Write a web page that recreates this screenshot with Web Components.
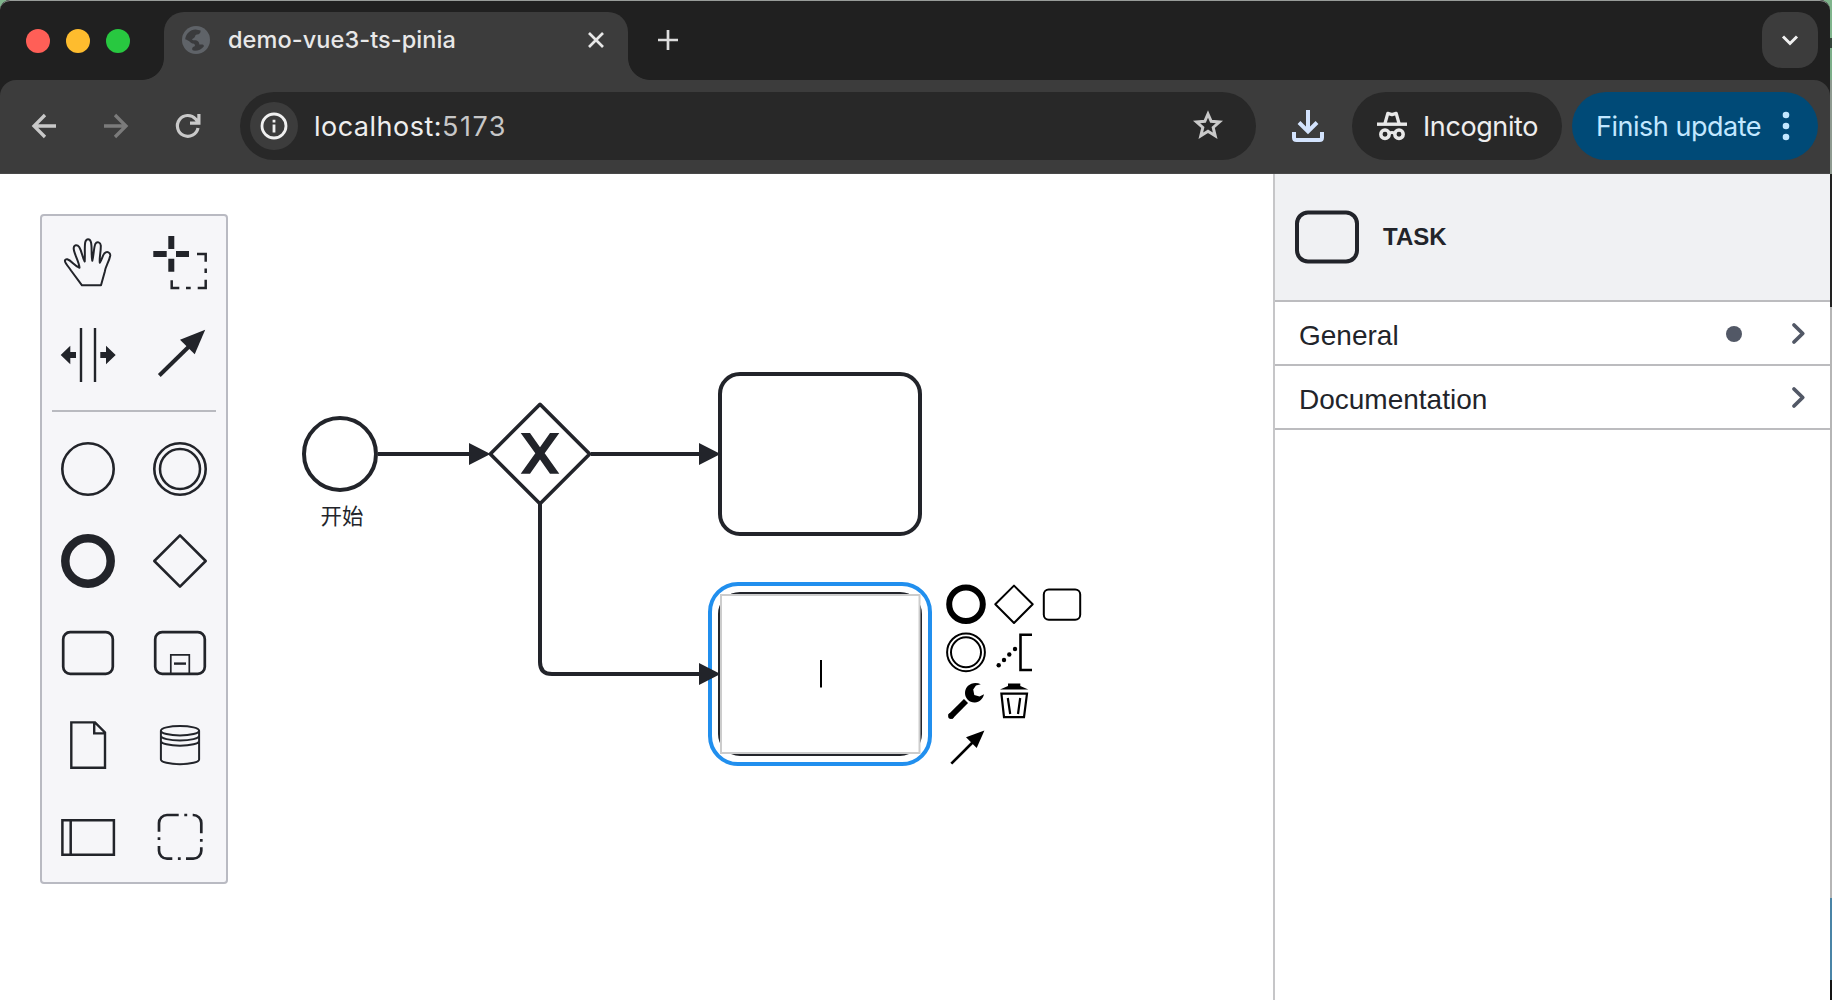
<!DOCTYPE html>
<html lang="en">
<head>
<meta charset="utf-8">
<title>demo-vue3-ts-pinia</title>
<style>
html,body{margin:0;height:100%;overflow:hidden;background:#1c1c1c}
</style>
</head>
<body>
<app-window></app-window>
<script>
const define=(name,html,after)=>{
  const t=document.createElement('template');t.innerHTML=html;
  customElements.define(name,class extends HTMLElement{
    constructor(){super();this.attachShadow({mode:'open'}).append(t.content.cloneNode(true));}
    connectedCallback(){if(after)after(this,this.shadowRoot);}
  });
};

/* one-line label whose tracking is set so that it spans a given width */
define('ui-label',`<style>:host{display:inline-block;white-space:nowrap;line-height:1}span{display:inline-block}</style><span><slot></slot></span>`,
(el,r)=>{
  const w=+el.getAttribute('span');if(!w)return;
  const s=r.querySelector('span'),n=el.textContent.length;
  s.style.letterSpacing=((w-s.getBoundingClientRect().width)/n)+'px';
});

define('ui-icon',`<style>:host{display:block;flex:none}svg{display:block;width:100%;height:100%;overflow:visible}</style><svg fill="none" stroke="currentColor"></svg>`,
(el,r)=>{
  const s=r.querySelector('svg');
  s.setAttribute('viewBox',el.getAttribute('box'));
  s.innerHTML=ICONS[el.getAttribute('name')];
});

const ICONS={
globe:`<circle cx="14" cy="14" r="14" fill="#5f6368" stroke="none"/><path fill="#3a3b3d" stroke="none" d="M3.2 13.2C3.8 8 8 3.8 13.6 3.6L18.6 4.5C18.8 7 17.5 8.2 15 8.6C12.6 9 13.6 11.4 11.6 12.2C9.6 13 9.6 14.2 12 14.2C15.5 14 17.6 16 17.3 18.5H20.4C21.6 18.6 22 19.5 21.8 20.4C19.5 23.6 15.5 25 11.4 24.6C9.6 23.8 9.6 21 12.4 20.4C13.6 20 13 18 11.2 17.6C8.6 17.4 7.4 14.4 3.2 13.2Z"/>`,
close:`<path stroke-width="2.7" d="M1 1 15 15M15 1 1 15"/>`,
plus:`<path stroke-width="2.7" d="M10 0V20M0 10H20"/>`,
caret:`<path stroke-width="3" d="M1 1.5 8 8.5 15 1.5"/>`,
back:`<path stroke-width="3.3" d="M24 12H2.2M13 1 2 12 13 23"/>`,
forward:`<path stroke-width="3.3" d="M0 12H21.8M11 1 22 12 11 23"/>`,
reload:`<path stroke-width="3.2" d="M22 14A10.400 10.400 0 1 1 19.600 5L22.500 8.500M14 9.200H22.900V0"/>`,
info:`<circle cx="13" cy="13" r="12" stroke-width="2.800"/><path stroke-width="2.800" d="M13 11.6V19.4M13 6.800V9.6"/>`,
star:`<path stroke-width="3" stroke-linejoin="miter" d="M16 4 19.2 11.3 27.4 12 21.2 17.5 23.2 25.8 16 21.3 8.8 25.8 10.8 17.5 4.6 12 12.8 11.3Z"/>`,
download:`<path stroke-width="4" d="M16 0V21M7 12.5 16 21.5 25 12.5M2 22V27.5Q2 30 4.500 30H27.500Q30 30 30 27.500V22"/>`,
incognito:`<path stroke-width="3.4" d="M0 13.200H30"/><path stroke-width="3.300" stroke-linejoin="round" d="M8 12.400 10.800 2.400 15 3.700 19.200 2.400 22 12.400"/><circle cx="8" cy="23.200" r="4.200" stroke-width="3.500"/><circle cx="22" cy="23.200" r="4.200" stroke-width="3.500"/><path stroke-width="3" d="M12 22.200Q15 20.600 18 22.200"/>`,
dots:`<g fill="currentColor" stroke="none"><circle cx="3" cy="3" r="3.300"/><circle cx="3" cy="14" r="3.300"/><circle cx="3" cy="25" r="3.300"/></g>`,
chev:`<path stroke-width="3.800" stroke-linecap="round" stroke-linejoin="round" d="M2 2 10.700 10.500 2 19"/>`,
taskBig:`<rect x="2" y="1.500" width="60" height="49" rx="11" stroke-width="4"/>`,

hand:`<path stroke-width="2" stroke-linejoin="round" d="M40 69.3 29 54.500C27.500 52 25.500 50 24 47.500C22 44.500 23 43 25.300 43.300C29.500 44.500 32.500 50 37.500 51.700C37 45 31.400 37 31.700 32C32 28.600 35.200 28.200 37.200 31C40 35.500 40.200 41 42.700 45.500C43.200 38 42.300 30 43.300 26C44.300 22.300 47.800 22.300 48.900 26C50.300 31 49 39 50.300 44.700C51.800 39 51.700 32 53.300 28C55 24.800 58.600 26.300 58.800 29.500C59 36 57.200 41 57.800 46.700C60 43 60.500 40 62.300 37.500C65 34.600 68.700 36.500 68.200 39.700C67 46 63.500 50 62.700 56L59 69.300Z"/>`,
lasso:`<g fill="currentColor" stroke="none"><path d="M34.300 20H40.300V33H34.300ZM34.300 42.700H40.300V55.700H34.300ZM19.300 35H32.700V41H19.300ZM42 35H55V41H42Z"/></g><path stroke-width="2.500" d="M63 38H71.700V45.700M71.700 52.500V57M71.700 63.700V72H63.700M52 72H56.700M45.300 72H37.700V64.300"/>`,
space:`<path stroke-width="2.400" d="M39 20V74M53 20V74"/><path fill="currentColor" stroke="none" d="M18.700 47 28.300 37.700V44H34V50H28.300V56.300ZM73.700 47 64 37.700V44H58.300V50H64V56.300Z"/>`,
connect:`<path stroke-width="4" d="M25.300 67.500 56 37.500"/><path fill="currentColor" stroke="none" d="M71.200 21.800 46 31.700 60.700 46.300Z"/>`,
start:`<circle cx="46" cy="46" r="25.700" stroke-width="2.600"/>`,
inter:`<circle cx="46" cy="46" r="25.700" stroke-width="2.600"/><circle cx="46" cy="46" r="20" stroke-width="2.500"/>`,
end:`<circle cx="46" cy="46" r="22.700" stroke-width="8.500"/>`,
gateway:`<path stroke-width="2.600" stroke-linejoin="round" d="M46 20.300 71.700 46 46 71.700 20.300 46Z"/>`,
task:`<rect x="21.200" y="25.200" width="49.600" height="41.600" rx="7" stroke-width="2.700"/>`,
sub:`<rect x="21.200" y="25.200" width="49.600" height="41.600" rx="7" stroke-width="2.700"/><path stroke-width="1.700" d="M36.800 66V47.900H55.300V66"/><path stroke-width="2.400" d="M40 56.600H52"/>`,
data:`<path stroke-width="2.400" d="M29.300 23.400H53L63 33.500V68.700H29.300ZM52.200 23.400V34.400H63"/>`,
store:`<path stroke-width="2" d="M26.900 31.700A19.100 4.700 0 0 1 65.100 31.700A19.100 4.700 0 0 1 26.900 31.700V60.500A19.100 4.700 0 0 0 65.100 60.500V31.700M26.900 36.800A19.100 4.700 0 0 0 65.100 36.800M26.900 42A19.100 4.700 0 0 0 65.100 42"/>`,
pool:`<path stroke-width="2.500" d="M20.400 29.200H71.900V63.700H20.400ZM28.700 29.200V63.700"/>`,
group:`<path stroke-width="2.700" d="M25 40.700V32a8 8 0 0 1 8-8H44.700M50.300 24H53.200M58.700 24H59.300a8 8 0 0 1 8 8V42.300M67.300 48V50.700M67.300 56.300V59.700a8 8 0 0 1-8 8H52M46.700 67.700H43.900M38.300 67.700H33a8 8 0 0 1-8-8V55M25 49V46.300"/>`,

pEnd:`<circle cx="24" cy="24.300" r="16.800" stroke-width="6"/>`,
pGateway:`<path stroke-width="2" stroke-linejoin="round" d="M24 5.600 42.700 24.300 24 43 5.300 24.300Z"/>`,
pTask:`<rect x="5.800" y="9.400" width="36.400" height="30.400" rx="5" stroke-width="2"/>`,
pInter:`<circle cx="24" cy="24.300" r="18.900" stroke-width="2"/><circle cx="24" cy="24.300" r="15" stroke-width="2"/>`,
pNote:`<path stroke-width="2.600" d="M42 6.700H30.500V42H42"/><g fill="currentColor" stroke="none"><circle cx="8.700" cy="37.300" r="2.200"/><circle cx="14" cy="32" r="2.200"/><circle cx="19.300" cy="26.500" r="2.200"/><circle cx="25" cy="21" r="2.200"/></g>`,
pWrench:`<path stroke-width="5.800" d="M8.400 40.600 24 25"/><circle cx="9" cy="40" r="2.900" fill="currentColor" stroke="none"/><path fill="currentColor" stroke="none" d="M38.800 8.200C31 4.500 23 9.500 23 17C23 22.500 27.500 26.800 33 26.500C37.500 26.200 41 23 42 18.300L37.500 20.600L32.300 19L31.200 13.500L34 9.500Z"/>`,
pTrash:`<path fill="currentColor" stroke="none" d="M10 13.500 18 10V7.500H30.300V10L38.300 13.500Z"/><path stroke-width="2.200" d="M11.400 17.700H37L34 41.200H14ZM17.800 22 20.200 38M30.200 22 28 38"/>`,
pConnect:`<path stroke-width="2.600" d="M9.300 39.700 31 18"/><path fill="currentColor" stroke="none" d="M42.400 6.500 24 13.200 34.700 24Z"/>`
};

define('tab-strip',`<style>
:host{display:flex;height:80px;padding:0 12px 0 26px;box-sizing:border-box;background:#202020}
.lights{display:flex;gap:16px;align-items:center;height:82px;width:138px}
i{width:24px;height:24px;border-radius:50%}
.tab{position:relative;display:flex;align-items:center;width:464px;height:68px;margin-top:12px;box-sizing:border-box;background:#3c3c3c;border-radius:20px 20px 0 0;padding:0 24px 12px 18px;color:#e8e8e8}
.tab:before,.tab:after{content:"";position:absolute;bottom:0;width:22px;height:22px}
.tab:before{right:100%;background:radial-gradient(circle at 0 0,#0000 21.500px,#3c3c3c 22.300px)}
.tab:after{left:100%;background:radial-gradient(circle at 100% 0,#0000 21.500px,#3c3c3c 22.300px)}
ui-label{font:450 23.500px/30px Inter,sans-serif;margin:-1px 0 0 18px;flex:1}
.plus{align-self:flex-start;margin:30px auto 0 30px;width:20px;height:20px;color:#ddd}
.menu{width:56px;height:56px;margin-top:12px;border-radius:20px;background:#3c3c3c;color:#f0f0f0;display:grid;place-items:center}
</style>
<div class="lights"><i style="background:#ff5f57"></i><i style="background:#febc2e"></i><i style="background:#28c840"></i></div>
<div class="tab"><ui-icon name="globe" box="0 0 28 28" style="width:28px;height:28px"></ui-icon><ui-label span="228">demo-vue3-ts-pinia</ui-label><ui-icon name="close" box="0 0 16 16" style="width:16px;height:16px"></ui-icon></div>
<ui-icon class="plus" name="plus" box="0 0 20 20"></ui-icon>
<div class="menu"><ui-icon name="caret" box="0 0 16 10" style="width:16px;height:10px"></ui-icon></div>`);

define('tool-bar',`<style>
:host{display:block;height:94px;background:#202020}
.bar{display:flex;align-items:center;height:94px;box-sizing:border-box;padding:0 12px 1px 32px;background:#3c3c3c;border-radius:16px 16px 0 0;color:#c9c9c9;border-bottom:1px solid #484848}
.url{display:flex;align-items:center;width:1016px;height:68px;border-radius:34px;background:#282828;box-sizing:border-box;padding:0 32px 0 10px;margin-left:40px}
.site{width:48px;height:48px;border-radius:50%;background:#3c3c3c;display:grid;place-items:center;color:#f0f0f0}
ui-label{font:400 27px/34px Inter,sans-serif;color:#eee;padding-top:1px}
.pill{display:flex;align-items:center;height:68px;border-radius:34px;background:#282828;box-sizing:border-box}
</style><div class="bar">
<ui-icon name="back" box="0 0 24 24" style="width:24px;height:24px"></ui-icon>
<ui-icon name="forward" box="0 0 24 24" style="width:24px;height:24px;margin-left:48px;color:#7b7b7b"></ui-icon>
<ui-icon name="reload" box="0 0 24 24" style="width:24px;height:24px;margin-left:48px"></ui-icon>
<div class="url"><div class="site"><ui-icon name="info" box="0 0 26 26" style="width:26px;height:26px"></ui-icon></div>
<ui-label span="128" style="margin-left:16px">localhost:</ui-label><ui-label span="65" style="color:#c7c7c7;flex:1">5173</ui-label>
<ui-icon name="star" box="0 0 32 32" style="width:32px;height:32px"></ui-icon></div>
<ui-icon name="download" box="0 0 32 32" style="width:32px;height:32px;margin:0 28px 0 36px;color:#d3e3fd"></ui-icon>
<div class="pill" style="width:210px;padding-left:25px"><ui-icon name="incognito" box="0 0 30 30" style="width:30px;height:30px;color:#e8e8e8"></ui-icon><ui-label span="115" style="margin-left:16px">Incognito</ui-label></div>
<div class="pill" style="width:246px;margin-left:10px;padding-left:24px;background:#004a77;color:#c2e7ff"><ui-label span="165" style="color:#c2e7ff">Finish update</ui-label><ui-icon name="dots" box="0 0 6 28" style="width:6px;height:28px;margin-left:22px"></ui-icon></div>
</div>`);

define('tool-palette',`<style>
:host{display:block;width:188px;height:670px;box-sizing:border-box;background:#f6f6f9;border:2px solid #b9bac2;border-radius:4px;color:#22242a}
.g{display:flex;flex-wrap:wrap;width:184px}
hr{margin:10px 10px 11px;border:0;height:2px;background:#b9bac0;width:164px}
ui-icon{width:92px;height:92px}
</style><div class="g a"></div><hr><div class="g b"></div>`,
(el,r)=>{
  const put=(q,l)=>r.querySelector(q).innerHTML=l.map(n=>`<ui-icon name="${n}" box="0 0 92 92"></ui-icon>`).join('');
  put('.a',['hand','lasso','space','connect']);
  put('.b',['start','inter','end','gateway','task','sub','data','store','pool','group']);
});

define('context-pad',`<style>
:host{display:block;color:#000}
div{display:flex}ui-icon{width:48px;height:48px}
</style>`,(el,r)=>{
  [['pEnd','pGateway','pTask'],['pInter','pNote'],['pWrench','pTrash'],['pConnect']].forEach(row=>{
    const d=document.createElement('div');
    d.innerHTML=row.map(n=>`<ui-icon name="${n}" box="0 0 48 48"></ui-icon>`).join('');r.append(d);
  });
});

define('bpmn-canvas',`<style>
:host{display:block;position:relative;width:1273px;height:826px;background:#fff;overflow:hidden}
svg{display:block}
tool-palette{position:absolute;left:40px;top:40px}
context-pad{position:absolute;left:942px;top:406px}
</style>
<svg width="1274" height="826" viewBox="0 174 1274 826" fill="none" stroke="#22242a" stroke-width="4">
<circle cx="340" cy="454" r="36"/>
<text x="342" y="523.500" text-anchor="middle" font-family="'Noto Sans CJK SC',sans-serif" font-size="21.500" fill="#22242a" stroke="none">开始</text>
<path d="M540 404.300 589.700 454 540 503.700 490.300 454Z" stroke-linejoin="round" stroke-width="3.600"/>
<path fill="#22242a" stroke="none" d="M520.700 433H530L540 447.300 550 433H559.300L544.700 453.300 559.300 473.700H550L540 459.400 530 473.700H520.700L535.300 453.300Z"/>
<rect x="720" y="374" width="200" height="160" rx="20"/>
<rect x="710" y="584" width="220" height="180" rx="28" stroke="#218fee"/>
<rect x="720" y="594" width="200" height="160" rx="20"/>
<path d="M378 454H472M591 454H702M540 504V662Q540 674 552 674H702"/>
<path fill="#22242a" stroke="none" d="M469 443 490.500 454 469 465ZM699 443 720.500 454 699 465ZM699 663 720.500 674 699 685Z"/>
<rect x="721" y="595" width="198.500" height="158" fill="#fff" stroke="#ccc" stroke-width="2"/>
<path stroke="#000" stroke-width="2" d="M821 660V687.500"/>
</svg>
<tool-palette></tool-palette><context-pad></context-pad>`);

define('panel-group',`<style>
:host{display:flex;align-items:center;height:64px;box-sizing:border-box;border-bottom:2px solid #bcbcbf;padding:1px 25px 0 24px;color:#22242a}
ui-label{font:28px/32px "Liberation Sans",Arial,sans-serif;flex:1;padding-top:4px}
.dot{display:none;width:16px;height:16px;border-radius:50%;background:#525866;margin-right:50px}
:host([edited]) .dot{display:block}
ui-icon{width:13px;height:21px;color:#525866}
</style><ui-label><slot></slot></ui-label><span class="dot"></span><ui-icon name="chev" box="0 0 13 21"></ui-icon>`);

define('properties-panel',`<style>
:host{display:block;width:557px;height:826px;background:#fff;border-left:2px solid #c6c6c8;box-sizing:border-box}
header{display:flex;align-items:center;gap:24px;height:128px;box-sizing:border-box;background:#f0f1f3;border-bottom:2px solid #bcbcbf;padding:0 20px;color:#22242a}
ui-icon{width:64px;height:53px}
ui-label{font:bold 24px/28px "Liberation Sans",Arial,sans-serif}
</style><header><ui-icon name="taskBig" box="0 0 64 53"></ui-icon><ui-label>TASK</ui-label></header>
<panel-group edited>General</panel-group><panel-group>Documentation</panel-group>`);

define('app-window',`<style>
:host{display:block;width:1832px;height:1000px;box-sizing:border-box;padding-right:2px;
background:linear-gradient(#7fb48c 0 38px,#33443a 38px 48px,#7cae89 48px 80px,#8e9a90 80px 174px,#222 174px 307px,#b5b5b5 307px 898px,#4a84a6 898px 980px,#151515 980px)}
.w{position:relative;height:1000px;border-radius:10px 10px 0 0;overflow:hidden;background:#202020;box-shadow:inset 0 1px #9a9f9c}
main{display:flex}
.edge{position:absolute;left:0;right:0;top:0;height:12px;border-top:1px solid #989c99;border-radius:10px 10px 0 0}
</style><div class="w"><tab-strip></tab-strip><tool-bar></tool-bar><main><bpmn-canvas></bpmn-canvas><properties-panel></properties-panel></main><div class="edge"></div></div>`);
</script>
</body>
</html>
